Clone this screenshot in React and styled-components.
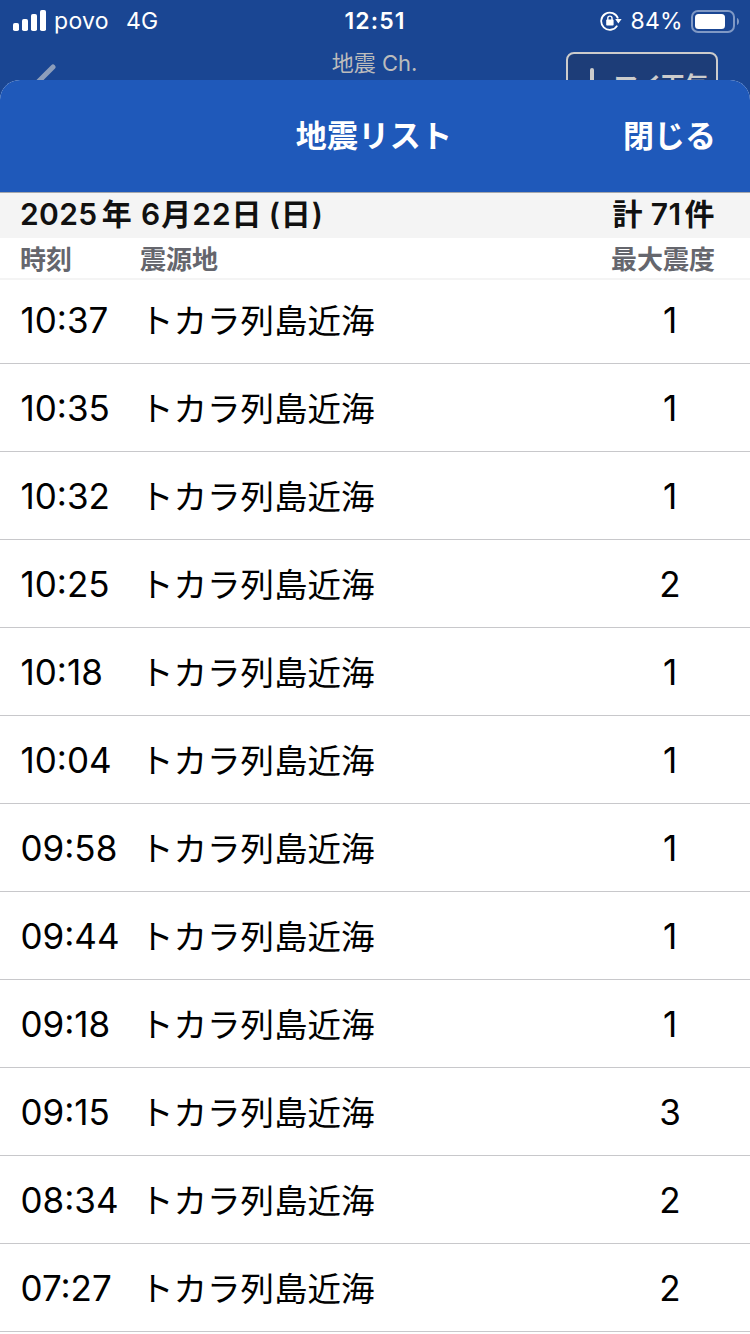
import React from 'react';
import styled, { createGlobalStyle } from 'styled-components';

const GlobalStyle = createGlobalStyle`
    * {
        box-sizing: border-box;
    }
    body {
        margin: 0;
        background-color: #1a4693;
        font-family: Inter, 'Noto Sans CJK JP', sans-serif;
        overflow: hidden;
    }
`;

const Screen = styled.div`
    display: flex;
    flex-direction: column;
    width: 750px;
    height: 1334px;
    overflow: hidden;
    background-color: #1a4693;
`;

const StatusBar = styled.div`
    display: grid;
    grid-template-columns: 1fr auto 1fr;
    align-items: center;
    flex: none;
    height: 40px;
    padding: 0 11px 0 13px;
    color: white;
    font-size: 23px;
    line-height: 42px;
`;

const StatusGroup = styled.div`
    display: flex;
    align-items: center;
    justify-content: ${({ $end }) => ($end ? 'flex-end' : 'flex-start')};
`;

const Carrier = styled.span`
    margin: 0 17px 0 8px;
    letter-spacing: 0.3px;
`;

const Network = styled.span`
    letter-spacing: 0.3px;
`;

const Clock = styled.span`
    margin-right: 2px;
    font-weight: 600;
    letter-spacing: 1.1px;
`;

const Percent = styled.span`
    margin: 0 8px;
    letter-spacing: 0.3px;
`;

const PageBar = styled.div`
    display: grid;
    grid-template-columns: 1fr auto 1fr;
    flex: none;
    height: 40px;
    padding: 0 32px;
    overflow: hidden;
`;

const PageTitle = styled.div`
    margin-right: 1px;
    color: #bcbcbc;
    font-size: 22px;
    font-weight: 400;
    line-height: 46px;
    white-space: nowrap;
`;

const Back = styled.svg`
    margin: 23px 0 0 -4px;
`;

const WeatherButton = styled.div`
    display: flex;
    justify-self: end;
    width: 152px;
    height: 60px;
    margin-top: 12px;
    padding: 14px 0 0 22px;
    border: 2px solid #cccccc;
    border-radius: 8px;
    background-color: #1d3d78;
    color: #cccccc;
    font-size: 23.5px;
    font-weight: 700;
    line-height: 35px;
    white-space: nowrap;
`;

const Sheet = styled.div`
    flex: 1;
    overflow: hidden;
    border-radius: 20px 20px 0 0;
    background-color: white;
`;

const SheetHeader = styled.div`
    display: grid;
    grid-template-columns: 1fr auto 1fr;
    align-items: center;
    height: 113px;
    padding: 0 34px 5px 33px;
    border-bottom: 1px solid #a5a7ac;
    background-color: #1f59ba;
    color: white;
    font-size: 31px;
    font-weight: 600;
`;

const SheetTitle = styled.div`
    grid-column: 2;
    margin-right: 1px;
    letter-spacing: 0.3px;
`;

const Close = styled.div`
    justify-self: end;
`;

const DateBar = styled.div`
    display: flex;
    justify-content: space-between;
    height: 45px;
    padding: 0 35px 0 20px;
    background-color: #f4f4f4;
    color: #111111;
    font-size: 30px;
    font-weight: 600;
    line-height: 42px;
`;

const DateText = styled.div`
    display: flex;
    gap: ${({ $gap }) => $gap}px;
    letter-spacing: 0.4px;
`;

const DayText = styled.span`
    letter-spacing: 1px;
`;

const ColumnBar = styled.div`
    display: grid;
    grid-template-columns: 120px 1fr auto;
    height: 42px;
    padding: 0 35px 0 20px;
    border-bottom: 2px solid #f4f4f4;
    color: #65666d;
    font-size: 26px;
    font-weight: 700;
    line-height: 43px;
`;

const List = styled.div`
    margin-top: -4px;
`;

const Row = styled.div`
    display: grid;
    grid-template-columns: 119px 1fr 90px;
    align-items: center;
    height: 88px;
    padding: 0 35px 0 20px;
    border-bottom: 1px solid #c8c8cb;
    color: black;
    font-size: 35px;
    line-height: 50px;
    white-space: nowrap;
`;

const Time = styled.div`
    padding-left: 0.5px;
`;

const Place = styled.div`
    padding: 2px 0 0 1px;
    font-size: 33.5px;
`;

const Intensity = styled.div`
    text-align: center;
`;

const quakes = [
    ['10:37', 1],
    ['10:35', 1],
    ['10:32', 1],
    ['10:25', 2],
    ['10:18', 1],
    ['10:04', 1],
    ['09:58', 1],
    ['09:44', 1],
    ['09:18', 1],
    ['09:15', 3],
    ['08:34', 2],
    ['07:27', 2],
];

const SignalIcon = () => (
    <svg width="33" height="22" viewBox="0 0 33 22" fill="white">
        <rect x="0" y="13" width="6" height="8" rx="1.8" />
        <rect x="9" y="9" width="6" height="12" rx="1.8" />
        <rect x="18" y="4" width="6" height="17" rx="1.8" />
        <rect x="27" y="0" width="6" height="21" rx="1.8" />
    </svg>
);

const RotationLockIcon = () => (
    <svg width="22" height="20" viewBox="0 0 22 20" fill="none" stroke="white">
        <path d="M17.2 14.6A8.6 8.6 0 1 1 18 7.6" strokeWidth="1.8" />
        <path d="M15.2 8h6.4L18.4 12.4z" fill="white" stroke="none" />
        <rect x="6.2" y="8.6" width="7.4" height="6" rx="0.8" fill="white" stroke="none" />
        <path d="M7.8 9V7.2a2.1 2.1 0 0 1 4.2 0V9" strokeWidth="1.4" />
    </svg>
);

const BatteryIcon = () => (
    <svg width="48" height="23" viewBox="0 0 48 23">
        <rect x="1" y="1" width="42" height="21" rx="6" fill="none" stroke="#8099c5" strokeWidth="2" />
        <rect x="4" y="4" width="30" height="15" rx="3.5" fill="white" />
        <path d="M46 8v7c1.5-.6 2-2 2-3.5s-.5-2.9-2-3.5z" fill="#8099c5" />
    </svg>
);

const App = () => (
    <>
        <GlobalStyle />
        <Screen>
            <StatusBar>
                <StatusGroup>
                    <SignalIcon />
                    <Carrier>povo</Carrier>
                    <Network>4G</Network>
                </StatusGroup>
                <Clock>12:51</Clock>
                <StatusGroup $end>
                    <RotationLockIcon />
                    <Percent>84%</Percent>
                    <BatteryIcon />
                </StatusGroup>
            </StatusBar>
            <PageBar>
                <Back width="30" height="40" viewBox="0 0 30 40">
                    <path d="M25 4L8 21l17 17" fill="none" stroke="#8d9ebb" strokeWidth="5" strokeLinecap="round" />
                </Back>
                <PageTitle>地震 Ch.</PageTitle>
                <WeatherButton>
                    <svg width="24" height="26" viewBox="0 0 24 26">
                        <path d="M2 2v22" stroke="#cccccc" strokeWidth="4" strokeLinecap="round" />
                    </svg>
                    マイ天気
                </WeatherButton>
            </PageBar>
            <Sheet>
                <SheetHeader>
                    <SheetTitle>地震リスト</SheetTitle>
                    <Close>閉じる</Close>
                </SheetHeader>
                <DateBar>
                    <DateText $gap={9}>
                        <DateText $gap={4}>
                            <span>2025</span>
                            <span>年</span>
                        </DateText>
                        <DateText $gap={6}>
                            <DayText>6月22日</DayText>
                            <DayText>(日)</DayText>
                        </DateText>
                    </DateText>
                    <DateText $gap={8}>
                        <span>計</span>
                        <DateText $gap={3}>
                            <span>71</span>
                            <span>件</span>
                        </DateText>
                    </DateText>
                </DateBar>
                <ColumnBar>
                    <span>時刻</span>
                    <span>震源地</span>
                    <span>最大震度</span>
                </ColumnBar>
                <List>
                    {quakes.map(([time, intensity]) => (
                        <Row key={time}>
                            <Time>{time}</Time>
                            <Place>トカラ列島近海</Place>
                            <Intensity>{intensity}</Intensity>
                        </Row>
                    ))}
                </List>
            </Sheet>
        </Screen>
    </>
);

export default App;
